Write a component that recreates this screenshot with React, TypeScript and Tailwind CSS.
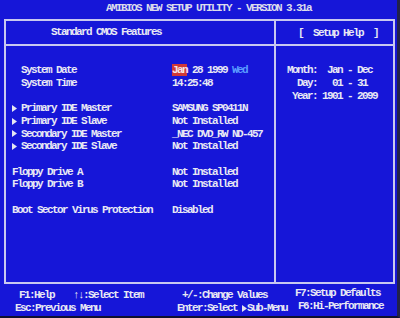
import React from "react";

const Tri = () => (
  <svg width="5" height="7" viewBox="0 0 5 7" className="inline-block">
    <polygon points="0,0 5,3.5 0,7" fill="#e6e6f2" />
  </svg>
);

type Row = { label?: string; value?: React.ReactNode; arrow?: boolean; indent?: boolean };

const rows: Row[] = [
  {
    label: "System Date",
    indent: true,
    value: (
      <span>
        <span className="bg-[#d03838] text-[#f4e4e4]">Jan</span> 28 1999{" "}
        <span className="text-[#5a9cff]">Wed</span>
      </span>
    ),
  },
  { label: "System Time", indent: true, value: "14:25:48" },
  {},
  { label: "Primary IDE Master", arrow: true, value: "SAMSUNG SP0411N" },
  { label: "Primary IDE Slave", arrow: true, value: "Not Installed" },
  { label: "Secondary IDE Master", arrow: true, value: "_NEC DVD_RW ND-457" },
  { label: "Secondary IDE Slave", arrow: true, value: "Not Installed" },
  {},
  { label: "Floppy Drive A", value: "Not Installed" },
  { label: "Floppy Drive B", value: "Not Installed" },
  {},
  { label: "Boot Sector Virus Protection", value: "Disabled" },
];

export default function App() {
  return (
    <div
      className="w-[400px] h-[318px] bg-[#1616d8] text-[#e8e8f4] overflow-hidden box-border border-r-[3px] border-r-[#22224a] border-b-[2px] border-b-[#101030] font-bold text-[11px] tracking-[-1.6px] whitespace-pre"
      style={{ fontFamily: '"Liberation Mono", "DejaVu Sans Mono", monospace' }}
    >
      <div className="h-[19px] flex items-center pl-[106px] pb-[3px] text-[#dcdcec]">
        AMIBIOS NEW SETUP UTILITY - VERSION 3.31a
      </div>
      <div className="ml-[4px] w-[391px] h-[265px] box-border border-2 border-[#c8c8f0] flex flex-col">
        <div className="h-[25px] box-border border-b-2 border-[#c8c8f0] flex">
          <div className="w-[270px] box-border border-r-2 border-[#c8c8f0] flex items-center pl-[45px]">
            Standard CMOS Features
          </div>
          <div className="flex-1 flex items-center pl-[22px] pt-[1px]">[  Setup Help  ]</div>
        </div>
        <div className="flex-1 flex">
          <div className="w-[270px] box-border border-r-2 border-[#c8c8f0] pt-[18px] pl-[6px] leading-[12.73px]">
            {rows.map((r, i) => (
              <div key={i} className="flex h-[12.73px]">
                <div className="w-[160px] flex">
                  {r.arrow || r.indent ? (
                    <span className="w-[9px] flex items-center">{r.arrow ? <Tri /> : null}</span>
                  ) : null}
                  <span>{r.label ?? ""}</span>
                </div>
                <div>{r.value ?? ""}</div>
              </div>
            ))}
          </div>
          <div className="flex-1 pt-[18px] pl-[11px] leading-[12.9px]">
            <div>Month:  Jan - Dec</div>
            <div>  Day:   01 - 31</div>
            <div> Year: 1901 - 2099</div>
          </div>
        </div>
      </div>
      <div className="pt-[5px] leading-[13px]">
        <div className="flex pl-[19px]">
          <div className="w-[54px]">F1:Help</div>
          <div className="w-[109px]">↑↓:Select Item</div>
          <div className="w-[113px]">+/-:Change Values</div>
          <div className="-mt-[2px]">F7:Setup Defaults</div>
        </div>
        <div className="flex pl-[15px]">
          <div className="w-[162px]">Esc:Previous Menu</div>
          <div className="w-[121px] flex items-center">
            Enter:Select <Tri />Sub-Menu
          </div>
          <div className="-mt-[2px]">F6:Hi-Performance</div>
        </div>
      </div>
    </div>
  );
}
